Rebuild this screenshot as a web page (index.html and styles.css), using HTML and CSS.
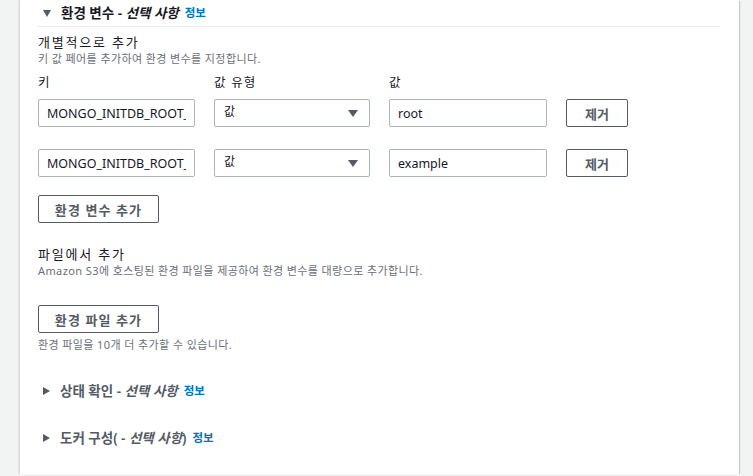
FILE: index.html
```html
<!DOCTYPE html>
<html>

<head>
    <meta charset=utf-8>
    <meta name="viewport" content="width=device-width, initial-scale=1">
    <title>환경 변수</title>
    <link rel="stylesheet" href="styles.css">
</head>

<body>
    <div class="card">
        <div class="section-head open">
            <span class="caret down"></span>
            <span class="head-title">환경 변수 - <i>선택 사항</i></span>
            <a class="info" href="#">정보</a>
        </div>

        <div class="content">
            <div class="group-title">개별적으로 추가</div>
            <div class="desc">키 값 페어를 추가하여 환경 변수를 지정합니다.</div>

            <div class="grid labels">
                <span>키</span>
                <span>값 유형</span>
                <span>값</span>
                <span></span>
            </div>

            <div class="grid row">
                <input type="text" class="field" value="MONGO_INITDB_ROOT_USERNAME">
                <div class="select"><span>값</span><span class="arrow"></span></div>
                <input type="text" class="field" value="root">
                <button class="btn">제거</button>
            </div>

            <div class="grid row second">
                <input type="text" class="field" value="MONGO_INITDB_ROOT_PASSWORD">
                <div class="select"><span>값</span><span class="arrow"></span></div>
                <input type="text" class="field" value="example">
                <button class="btn">제거</button>
            </div>

            <button class="btn wide add-var">환경 변수 추가</button>

            <div class="group-title from-file">파일에서 추가</div>
            <div class="desc">Amazon S3에 호스팅된 환경 파일을 제공하여 환경 변수를 대량으로 추가합니다.</div>

            <button class="btn wide add-file">환경 파일 추가</button>
            <div class="desc hint">환경 파일을 10개 더 추가할 수 있습니다.</div>
        </div>

        <div class="section-head closed first">
            <span class="caret right"></span>
            <span class="head-title">상태 확인 - <i>선택 사항</i></span>
            <a class="info" href="#">정보</a>
        </div>

        <div class="section-head closed">
            <span class="caret right"></span>
            <span class="head-title">도커 구성( - <i>선택 사항</i>)</span>
            <a class="info" href="#">정보</a>
        </div>
    </div>
</body>

</html>
```

FILE: styles.css
```css
body {
    margin: 0;
    background-color: #f2f3f3;
    font-family: "Noto Sans", "Noto Sans CJK KR", sans-serif;
    color: #16191f;
    font-size: 13px;
}

/* The white panel, its top runs off the page */
.card {
    width: 719px;
    margin-left: 19px;
    background-color: #fff;
    border-left: 1px solid #d5dbdb;
    box-shadow: 0 1px 1px 0 rgba(0, 28, 36, .3), 1px 1px 1px 0 rgba(0, 28, 36, .15);
    padding-bottom: 23px;
}

.section-head {
    display: flex;
    align-items: center;
    height: 26px;
    line-height: 26px;
    margin: 0 19px 0 18px;
    font-size: 13.5px;
    font-weight: 600;
    color: #545b64;
}

.section-head.open {
    height: 26px;
    border-bottom: 1px solid #eaeded;
    color: #16191f;
}

.section-head.closed {
    margin-top: 21px;
}

.section-head.first {
    margin-top: 25px;
}

.head-title i {
    font-style: italic;
}

.caret {
    width: 0;
    height: 0;
    margin: 0 10px 0 5px;
}

.caret.down {
    border-left: 4px solid transparent;
    border-right: 4px solid transparent;
    border-top: 7px solid #545b64;
}

.caret.right {
    border-top: 4px solid transparent;
    border-bottom: 4px solid transparent;
    border-left: 7px solid #545b64;
}

.info {
    color: #0073bb;
    font-size: 11.5px;
    font-weight: 700;
    text-decoration: none;
    margin-left: 6px;
}

.content {
    padding: 0 19px 0 18px;
}

.group-title {
    margin-top: 6px;
    line-height: 18px;
    font-size: 13px;
    letter-spacing: 1.8px;
}

.group-title.from-file {
    margin-top: 22px;
}

.desc {
    line-height: 16px;
    font-size: 11px;
    letter-spacing: 0.4px;
    color: #687078;
}

.desc.hint {
    margin-top: 4px;
}

/* key / type / value / remove columns */
.grid {
    display: grid;
    grid-template-columns: 157px 156px 158px 62px;
    column-gap: 19px;
}

.labels {
    margin-top: 7px;
    line-height: 18px;
    font-size: 12.5px;
    letter-spacing: 1.2px;
}

.row {
    margin-top: 7px;
    height: 28px;
}

.row.second {
    margin-top: 22px;
}

.field {
    box-sizing: border-box;
    width: 100%;
    height: 28px;
    padding: 0 8px;
    border: 1px solid #aab7b8;
    border-radius: 2px;
    font-family: "Noto Sans", "Noto Sans CJK KR", sans-serif;
    font-size: 12.5px;
    color: #16191f;
    background: #fff;
    outline: none;
}

.select {
    box-sizing: border-box;
    height: 28px;
    padding: 0 11px 0 9px;
    border: 1px solid #aab7b8;
    border-radius: 2px;
    display: flex;
    align-items: center;
    justify-content: space-between;
    font-size: 12px;
}

.select span:first-child {
    margin-top: -5px;
}

.arrow {
    width: 0;
    height: 0;
    border-left: 5px solid transparent;
    border-right: 5px solid transparent;
    border-top: 7px solid #545b64;
}

.btn {
    box-sizing: border-box;
    height: 28px;
    padding: 0;
    border: 1px solid #545b64;
    border-radius: 2px;
    background: #fff;
    font-family: "Noto Sans", "Noto Sans CJK KR", sans-serif;
    font-size: 13px;
    font-weight: 600;
    color: #545b64;
    cursor: pointer;
}

.btn.wide {
    display: block;
    width: 121px;
    letter-spacing: 1.1px;
}

.add-var {
    margin-top: 18px;
}

.add-file {
    margin-top: 26px;
}
```
